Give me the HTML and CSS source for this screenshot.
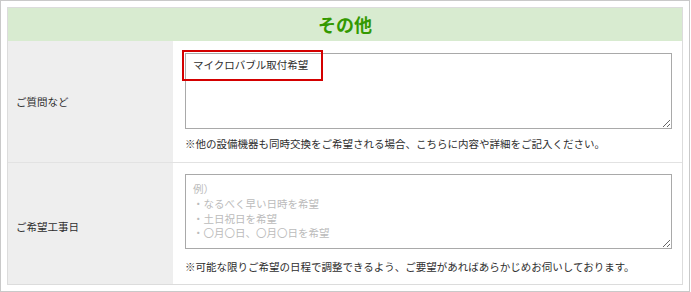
FILE: index.html
```
<!DOCTYPE html>
<html lang="ja">
<head>
<meta charset="utf-8">
<title>その他</title>
<link rel="stylesheet" href="styles.css">
</head>
<body>
<div class="frame">
  <div class="form-table">
    <div class="form-head">その他</div>
    <div class="form-row">
      <div class="form-label">ご質問など</div>
      <div class="form-field">
        <textarea class="field-area">マイクロバブル取付希望</textarea>
        <p class="field-note">※他の設備機器も同時交換をご希望される場合、こちらに内容や詳細をご記入ください。</p>
        <div class="highlight"></div>
      </div>
    </div>
    <div class="form-row form-row--last">
      <div class="form-label form-label--low">ご希望工事日</div>
      <div class="form-field form-field--second">
        <textarea class="field-area field-area--second" placeholder="例）&#10;・なるべく早い日時を希望&#10;・土日祝日を希望&#10;・〇月〇日、〇月〇日を希望"></textarea>
        <p class="field-note field-note--second">※可能な限りご希望の日程で調整できるよう、ご要望があればあらかじめお伺いしております。</p>
      </div>
    </div>
  </div>
</div>
</body>
</html>
```
FILE: styles.css
```
* {
  box-sizing: border-box;
}
html, body {
  margin: 0;
  padding: 0;
  background: #ffffff;
}
body {
  font-family: "Noto Sans CJK JP", "Noto Sans", sans-serif;
  color: #333333;
}
.frame {
  width: 690px;
  height: 292px;
  border: 1px solid #c9c9c9;
  padding: 6px;
}
.form-table {
  width: 676px;
  height: 278px;
  border: 1px solid #dcdcdc;
  display: flex;
  flex-direction: column;
}
.form-head {
  height: 33px;
  background: #d8ebd0;
  color: #339900;
  font-weight: bold;
  font-size: 18px;
  line-height: 33px;
  text-align: center;
}
.form-row {
  display: flex;
  height: 122px;
  border-bottom: 1px solid #e2e2e2;
}
.form-row--last {
  height: 121px;
  border-bottom: none;
}
.form-label {
  width: 165px;
  background: #eeeeee;
  font-size: 10.5px;
  line-height: 15px;
  padding-left: 8px;
  display: flex;
  align-items: center;
  color: #2e2e2e;
}
.form-label--low {
  padding-top: 6px;
}
.form-field {
  position: relative;
  flex: 1;
  padding: 12px 10px 0 12px;
}
.form-field--second {
  padding-top: 11px;
}
.field-area {
  display: block;
  width: 487px;
  height: 76px;
  margin: 0;
  border: 1px solid #a9a9a9;
  padding: 4px 7px;
  font-family: "Noto Sans CJK JP", "Noto Sans", sans-serif;
  font-size: 10.5px;
  line-height: 14.8px;
  color: #2e2e2e;
  background: #ffffff;
  outline: none;
}
.field-area--second {
  height: 75px;
  padding-top: 7px;
}
.field-area::placeholder {
  color: #bbbbbb;
}
.field-note {
  margin: 7px 0 0 0;
  font-size: 10.5px;
  line-height: 15px;
  white-space: nowrap;
  color: #2e2e2e;
}
.field-note--second {
  margin-top: 10px;
}
.highlight {
  position: absolute;
  left: 9px;
  top: 9px;
  width: 141px;
  height: 31px;
  border: 2px solid #d40000;
  pointer-events: none;
}
```
